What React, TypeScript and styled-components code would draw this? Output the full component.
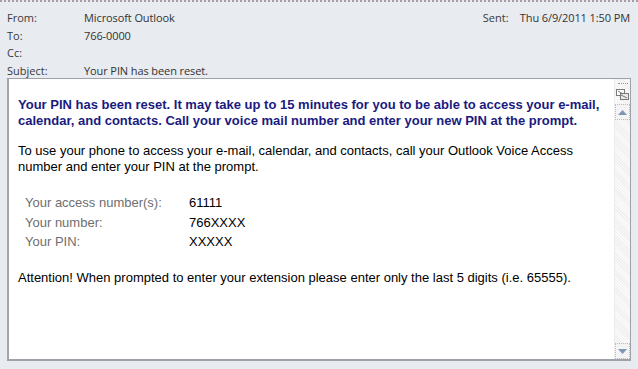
import React from "react";
import styled, { createGlobalStyle } from "styled-components";

const Global = createGlobalStyle`
  html, body { margin: 0; padding: 0; background: #e8ebf0; }
  * { box-sizing: border-box; }
`;

const Page = styled.div`
  width: 638px;
  height: 369px;
  background: #e8ebf0;
  border-top: 2px dotted #a898a8;
  display: flex;
  flex-direction: column;
  overflow: hidden;
`;

const Header = styled.div`
  position: relative;
  padding: 7px 7px 0 7px;
  height: 76px;
  font-family: "Open Sans", "Noto Sans", sans-serif;
  font-size: 11px;
  color: #333;
`;

const HeaderRow = styled.div`
  display: grid;
  grid-template-columns: 77px 1fr;
  height: 17.5px;
  line-height: 17.5px;
  white-space: nowrap;
`;

const Label = styled.span`
  color: #3a3a3a;
`;

const Value = styled.span`
  color: #333;
  letter-spacing: -0.1px;
`;

const Sent = styled.div`
  position: absolute;
  top: 7px;
  right: 8px;
  display: grid;
  grid-template-columns: 37px auto;
  line-height: 17.5px;
  white-space: nowrap;
`;

const Frame = styled.div`
  margin: 0 7px 8px 7px;
  flex: 1;
  display: flex;
  background: #fff;
  border: 1px solid #9ea2a8;
  border-left-width: 2px;
  border-bottom-width: 2px;
  border-left-color: #a2a6ac;
`;

const Content = styled.div`
  flex: 1;
  padding: 18px 10px 0 9px;
  font-family: "Liberation Sans", Arial, sans-serif;
  font-size: 13px;
  line-height: 16px;
  color: #000;
`;

const Lead = styled.p`
  margin: 0 0 14px 0;
  font-weight: bold;
  color: #1a1a80;
`;

const Para = styled.p<{ $gap?: number }>`
  margin: 0 0 ${(p) => p.$gap ?? 14}px 0;
`;

const Info = styled.div`
  display: grid;
  grid-template-columns: 164px auto;
  row-gap: 3px;
  padding-left: 7px;
  margin-bottom: 19px;
  line-height: 16.5px;
`;

const InfoLabel = styled.span`
  color: #6e6e6e;
`;

const InfoValue = styled.span`
  color: #000;
`;

const Scrollbar = styled.div`
  width: 16px;
  display: flex;
  flex-direction: column;
  align-items: center;
  background-color: #f6f6f6;
  background-image: repeating-linear-gradient(45deg, #efefef 0 1px, #fbfbfb 1px 2px);
  border-left: 1px solid #ececec;
  padding-top: 4px;
`;

const Grip = styled.div`
  width: 10px;
  height: 2px;
  border-top: 1px dotted #8c97a8;
  margin-bottom: 4px;
`;

const Icon = styled.svg`
  display: block;
  margin-bottom: 4px;
`;

const ArrowBtn = styled.div`
  width: 15px;
  height: 16px;
  border: 1px dotted #b8bcc4;
  background: #f4f4f4;
  display: flex;
  align-items: center;
  justify-content: center;
`;

const Track = styled.div`
  flex: 1;
`;

export default function App() {
  return (
    <>
      <Global />
      <Page>
        <Header>
          <HeaderRow>
            <Label>From:</Label>
            <Value>Microsoft Outlook</Value>
          </HeaderRow>
          <HeaderRow>
            <Label>To:</Label>
            <Value>766-0000</Value>
          </HeaderRow>
          <HeaderRow>
            <Label>Cc:</Label>
            <Value></Value>
          </HeaderRow>
          <HeaderRow>
            <Label>Subject:</Label>
            <Value>Your PIN has been reset.</Value>
          </HeaderRow>
          <Sent>
            <Label>Sent:</Label>
            <Value>Thu 6/9/2011 1:50 PM</Value>
          </Sent>
        </Header>
        <Frame>
          <Content>
            <Lead>
              Your PIN has been reset. It may take up to 15 minutes for you to be able to access your e-mail,
              calendar, and contacts. Call your voice mail number and enter your new PIN at the prompt.
            </Lead>
            <Para $gap={20}>
              To use your phone to access your e-mail, calendar, and contacts, call your Outlook Voice Access
              number and enter your PIN at the prompt.
            </Para>
            <Info>
              <InfoLabel>Your access number(s):</InfoLabel>
              <InfoValue>61111</InfoValue>
              <InfoLabel>Your number:</InfoLabel>
              <InfoValue>766XXXX</InfoValue>
              <InfoLabel>Your PIN:</InfoLabel>
              <InfoValue>XXXXX</InfoValue>
            </Info>
            <Para>
              Attention! When prompted to enter your extension please enter only the last 5 digits (i.e. 65555).
            </Para>
          </Content>
          <Scrollbar>
            <Grip />
            <Icon width="13" height="11" viewBox="0 0 13 11">
              <rect x="0.5" y="0.5" width="8" height="6" fill="#fff" stroke="#7a7a7a" />
              <rect x="4.5" y="4.5" width="8" height="6" fill="#e8e8e8" stroke="#7a7a7a" />
              <path d="M2 2 L7 5 M5 6 L11 9" stroke="#7a7a7a" strokeWidth="1" />
            </Icon>
            <ArrowBtn>
              <svg width="9" height="5" viewBox="0 0 9 5">
                <path d="M0 5 L4.5 0 L9 5 Z" fill="#7f96b4" />
              </svg>
            </ArrowBtn>
            <Track />
            <ArrowBtn>
              <svg width="9" height="5" viewBox="0 0 9 5">
                <path d="M0 0 L4.5 5 L9 0 Z" fill="#7f96b4" />
              </svg>
            </ArrowBtn>
          </Scrollbar>
        </Frame>
      </Page>
    </>
  );
}
